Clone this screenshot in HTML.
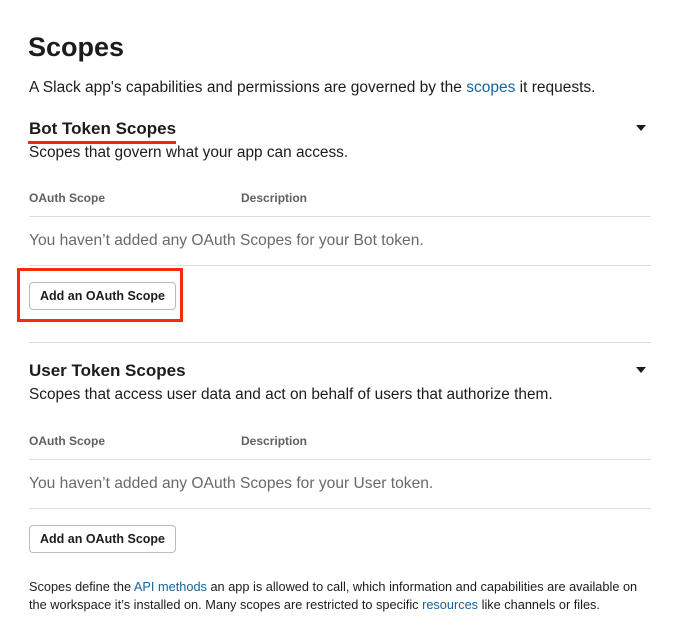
<!DOCTYPE html>
<html><head><meta charset="utf-8"><style>
body{margin:0;width:680px;height:642px;background:#fff;font-family:"Liberation Sans",sans-serif;color:#1d1c1d;position:relative;overflow:hidden}
.a{position:absolute;white-space:nowrap}
.hr{position:absolute;left:29px;width:622px;height:1px;background:#dddddd}
.btn{position:absolute;left:29px;width:145px;height:26px;border:1px solid #bbb;border-radius:4px;font-size:12.5px;font-weight:bold;text-align:center;line-height:26px;color:#1d1c1d;background:#fff}
.th{font-size:12px;color:#616061;font-weight:bold}
.em{font-size:15.6px;color:#696969}
.tri{position:absolute;left:636px;width:0;height:0;border-left:5px solid transparent;border-right:5px solid transparent;border-top:6px solid #1d1c1d}
a{color:#1264a3;text-decoration:none}
</style></head><body>
<div class="a" style="left:28px;top:29px;font-size:27px;font-weight:bold;line-height:36px">Scopes</div>
<div class="a" style="left:29px;top:78px;font-size:15.5px;line-height:20px">A Slack app's capabilities and permissions are governed by the <a>scopes</a> it requests.</div>

<div class="a" style="left:29px;top:118px;font-size:17px;font-weight:bold;line-height:22px">Bot Token Scopes</div>
<div class="a" style="left:28px;top:141px;width:148px;height:3px;background:#e8281c"></div>
<div class="tri" style="top:125px"></div>
<div class="a" style="left:29px;top:143px;font-size:15.4px;line-height:20px">Scopes that govern what your app can access.</div>
<div class="a th" style="left:29px;top:191px">OAuth Scope</div>
<div class="a th" style="left:241px;top:191px">Description</div>
<div class="hr" style="top:216px"></div>
<div class="a em" style="left:29px;top:232px">You haven’t added any OAuth Scopes for your Bot token.</div>
<div class="hr" style="top:265px"></div>
<div class="btn" style="top:282px">Add an OAuth Scope</div>
<div class="a" style="left:17px;top:268px;width:160px;height:48px;border:3px solid #f52a0f"></div>
<div class="hr" style="top:342px"></div>

<div class="a" style="left:29px;top:360px;font-size:17px;font-weight:bold;line-height:22px">User Token Scopes</div>
<div class="tri" style="top:367px"></div>
<div class="a" style="left:29px;top:385px;font-size:15.4px;line-height:20px">Scopes that access user data and act on behalf of users that authorize them.</div>
<div class="a th" style="left:29px;top:434px">OAuth Scope</div>
<div class="a th" style="left:241px;top:434px">Description</div>
<div class="hr" style="top:459px"></div>
<div class="a em" style="left:29px;top:475px">You haven’t added any OAuth Scopes for your User token.</div>
<div class="hr" style="top:508px"></div>
<div class="btn" style="top:525px">Add an OAuth Scope</div>

<div class="a" style="left:29px;top:578px;font-size:12.75px;line-height:18px">Scopes define the <a>API methods</a> an app is allowed to call, which information and capabilities are available on<br>the workspace it’s installed on. Many scopes are restricted to specific <a>resources</a> like channels or files.</div>
</body></html>
